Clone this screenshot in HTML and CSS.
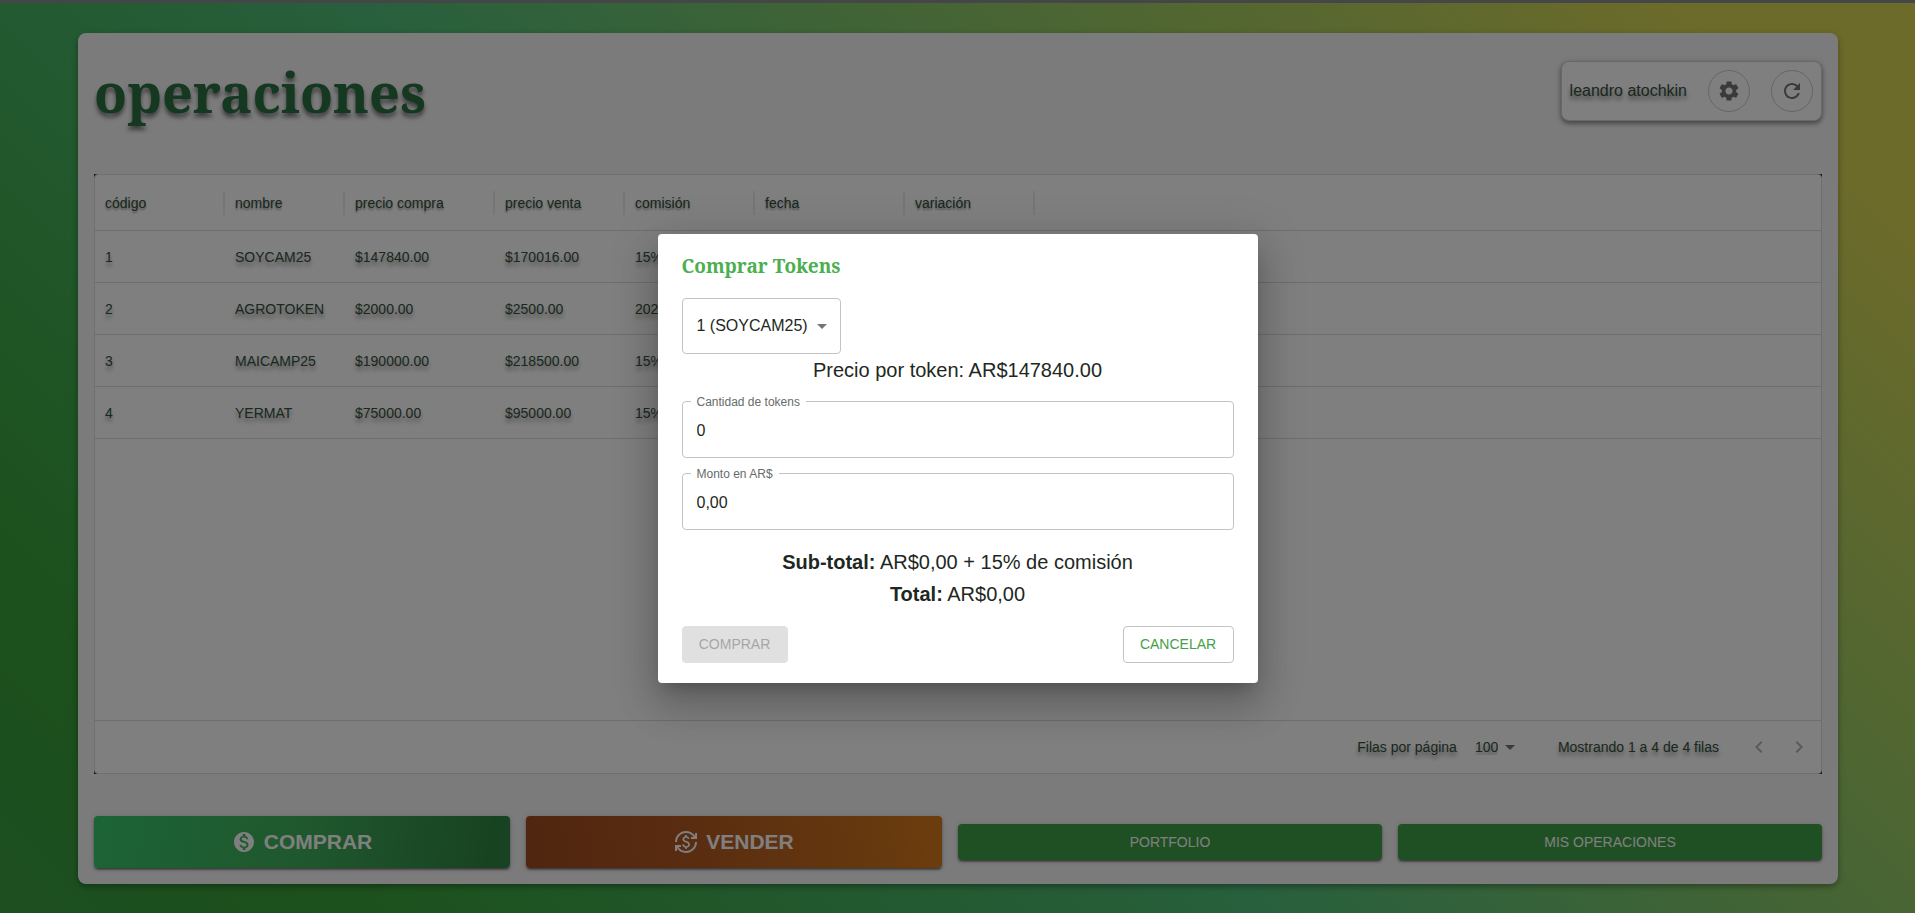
FILE: index.html
```html
<!DOCTYPE html>
<html lang="es">
<head>
<meta charset="utf-8">
<title>operaciones</title>
<link rel="stylesheet" href="styles.css">
</head>
<body>
<div class="topline"></div>
<div class="stage">
  <main class="card">
    <header class="head">
      <h1 class="title">operaciones</h1>
      <div class="user">
        <span class="user-name">leandro atochkin</span>
        <button class="round" type="button" aria-label="Configuración">
          <svg class="icon" viewBox="0 0 24 24"><path d="M19.14 12.94c.04-.3.06-.61.06-.94 0-.32-.02-.64-.07-.94l2.03-1.58c.18-.14.23-.41.12-.61l-1.92-3.32c-.12-.22-.37-.29-.59-.22l-2.39.96c-.5-.38-1.03-.7-1.62-.94l-.36-2.54c-.04-.24-.24-.41-.48-.41h-3.84c-.24 0-.43.17-.47.41l-.36 2.54c-.59.24-1.13.57-1.62.94l-2.39-.96c-.22-.08-.47 0-.59.22L2.74 8.87c-.12.21-.08.47.12.61l2.03 1.58c-.05.3-.09.63-.09.94s.02.64.07.94l-2.03 1.58c-.18.14-.23.41-.12.61l1.92 3.32c.12.22.37.29.59.22l2.39-.96c.5.38 1.03.7 1.62.94l.36 2.54c.05.24.24.41.48.41h3.84c.24 0 .44-.17.47-.41l.36-2.54c.59-.24 1.13-.56 1.62-.94l2.39.96c.22.08.47 0 .59-.22l1.92-3.32c.12-.22.07-.47-.12-.61l-2.01-1.58zM12 15.6c-1.98 0-3.6-1.62-3.6-3.6s1.62-3.6 3.6-3.6 3.6 1.62 3.6 3.6-1.62 3.6-3.6 3.6z"/></svg>
        </button>
        <button class="round" type="button" aria-label="Actualizar">
          <svg class="icon" viewBox="0 0 24 24"><path d="M17.65 6.35C16.2 4.9 14.21 4 12 4c-4.42 0-7.99 3.58-7.99 8s3.57 8 7.99 8c3.73 0 6.84-2.55 7.73-6h-2.08c-.82 2.33-3.04 4-5.65 4-3.31 0-6-2.69-6-6s2.69-6 6-6c1.66 0 3.14.69 4.22 1.78L13 11h7V4l-2.35 2.35z"/></svg>
        </button>
      </div>
    </header>

    <div class="grid-wrap">
      <section class="grid">
        <table class="table">
          <colgroup>
            <col class="c130"><col class="c120"><col class="c150"><col class="c130"><col class="c130"><col class="c150"><col class="c130"><col>
          </colgroup>
          <thead>
            <tr>
              <th><span>código</span></th><th><span>nombre</span></th><th><span>precio compra</span></th><th><span>precio venta</span></th><th><span>comisión</span></th><th><span>fecha</span></th><th><span>variación</span></th><td></td>
            </tr>
          </thead>
          <tbody>
            <tr><td>1</td><td>SOYCAM25</td><td>$147840.00</td><td>$170016.00</td><td>15%</td><td></td><td></td><td></td></tr>
            <tr><td>2</td><td>AGROTOKEN</td><td>$2000.00</td><td>$2500.00</td><td>2025</td><td></td><td></td><td></td></tr>
            <tr><td>3</td><td>MAICAMP25</td><td>$190000.00</td><td>$218500.00</td><td>15%</td><td></td><td></td><td></td></tr>
            <tr><td>4</td><td>YERMAT</td><td>$75000.00</td><td>$95000.00</td><td>15%</td><td></td><td></td><td></td></tr>
          </tbody>
        </table>
        <footer class="pager">
          <label for="rows">Filas por página</label>
          <span class="pick pick-small">
            <select id="rows"><option>100</option></select>
            <svg class="icon arrow" viewBox="0 0 24 24"><path d="M7 10l5 5 5-5z"/></svg>
          </span>
          <span class="range">Mostrando 1 a 4 de 4 filas</span>
          <button class="step" type="button" disabled aria-label="Anterior"><svg class="icon" viewBox="0 0 24 24"><path d="M15.41 7.41L14 6l-6 6 6 6 1.41-1.41L10.83 12z"/></svg></button>
          <button class="step" type="button" disabled aria-label="Siguiente"><svg class="icon" viewBox="0 0 24 24"><path d="M8.59 16.59L13.17 12 8.59 7.41 10 6l6 6-6 6z"/></svg></button>
        </footer>
      </section>
    </div>

    <nav class="actions">
      <button class="btn big buy" type="button">
        <svg class="icon" viewBox="0 0 24 24"><path d="M12 2C6.48 2 2 6.48 2 12s4.48 10 10 10 10-4.48 10-10S17.52 2 12 2zm1.41 16.09V20h-2.67v-1.93c-1.71-.36-3.16-1.46-3.27-3.4h1.96c.1 1.05.82 1.87 2.65 1.87 1.96 0 2.4-.98 2.4-1.59 0-.83-.44-1.61-2.67-2.14-2.48-.6-4.18-1.62-4.18-3.67 0-1.72 1.39-2.84 3.11-3.21V4h2.67v1.95c1.86.45 2.79 1.86 2.85 3.39H14.3c-.05-1.11-.64-1.87-2.22-1.87-1.5 0-2.4.68-2.4 1.64 0 .84.65 1.39 2.67 1.91s4.18 1.39 4.18 3.91c-.01 1.83-1.38 2.83-3.12 3.16z"/></svg>
        COMPRAR
      </button>
      <button class="btn big sell" type="button">
        <svg class="icon" viewBox="0 0 24 24"><path d="M12.89 11.1c-1.78-.59-2.64-.96-2.64-1.9 0-1.02 1.11-1.39 1.81-1.39 1.31 0 1.79.99 1.9 1.34l1.58-.67c-.15-.44-.82-1.91-2.66-2.23V5h-1.75v1.26c-2.6.56-2.62 2.85-2.62 2.96 0 2.27 2.25 2.91 3.35 3.31 1.58.56 2.28 1.07 2.28 2.03 0 1.13-1.05 1.61-1.98 1.61-1.82 0-2.34-1.87-2.4-2.09l-1.66.67c.63 2.19 2.28 2.78 3.02 2.96V19h1.75v-1.24c.52-.09 3.02-.59 3.02-3.22.01-1.39-.6-2.61-3-3.44zM3 21H1v-6h6v2H4.52c1.61 2.41 4.36 4 7.48 4 4.97 0 9-4.03 9-9h2c0 6.08-4.92 11-11 11-3.72 0-7.01-1.85-9-4.67V21zM1 12C1 5.92 5.92 1 12 1c3.72 0 7.01 1.85 9 4.67V3h2v6h-6V7h2.48C17.87 4.59 15.12 3 12 3c-4.97 0-9 4.03-9 9H1z"/></svg>
        VENDER
      </button>
      <button class="btn" type="button">PORTFOLIO</button>
      <button class="btn" type="button">MIS OPERACIONES</button>
    </nav>
  </main>

  <div class="backdrop">
    <form class="dialog" role="dialog" aria-labelledby="dialog-title">
      <h2 class="dialog-title" id="dialog-title">Comprar Tokens</h2>
      <span class="pick pick-box">
        <select aria-label="Token"><option>1 (SOYCAM25)</option></select>
        <svg class="icon arrow" viewBox="0 0 24 24"><path d="M7 10l5 5 5-5z"/></svg>
      </span>
      <p class="line">Precio por token: AR$147840.00</p>
      <div class="fields">
        <fieldset class="field">
          <legend><label for="qty">Cantidad de tokens</label></legend>
          <input id="qty" type="text" value="0">
        </fieldset>
        <fieldset class="field">
          <legend><label for="amount">Monto en AR$</label></legend>
          <input id="amount" type="text" value="0,00">
        </fieldset>
      </div>
      <p class="line"><strong>Sub-total:</strong> AR$0,00 + 15% de comisión</p>
      <p class="line"><strong>Total:</strong> AR$0,00</p>
      <div class="dialog-actions">
        <button class="dbtn solid" type="button" disabled>COMPRAR</button>
        <button class="dbtn outline" type="button">CANCELAR</button>
      </div>
    </form>
  </div>
</div>
</body>
</html>
```
FILE: styles.css
```css
* { box-sizing: border-box; }

body {
  margin: 0;
  min-height: 100vh;
  display: flex;
  flex-direction: column;
  font-family: "Liberation Sans", Arial, sans-serif;
  font-size: 14px;
  color: #34503c;
}

button, input, select { font: inherit; color: inherit; }

.icon { width: 24px; height: 24px; fill: currentColor; display: block; flex: none; }

.topline { height: 3px; background: #444647; }

.stage {
  position: relative;
  flex: 1;
  display: flex;
  padding: 30px 77px 29px 78px;
  background: linear-gradient(45deg, #3a9e42 0%, #38a038 12%, #50c07a 45%, #dad654 92%);
}

.card {
  flex: 1;
  display: flex;
  flex-direction: column;
  padding: 28px 16px 16px;
  border-radius: 8px;
  background: #f6f6f6;
  box-shadow: 0 3px 5px rgba(0, 0, 0, .2), 0 2px 8px rgba(0, 0, 0, .15);
}

.head {
  display: flex;
  justify-content: space-between;
  align-items: flex-start;
  margin-bottom: 51px;
}

.title {
  margin: 0;
  font-family: "Droid Serif", "Noto Serif", "Liberation Serif", serif;
  font-size: 54px;
  line-height: 62px;
  font-weight: 700;
  color: #2a7040;
  text-shadow: 0 4px 4px rgba(0, 0, 0, .5);
}

.user {
  display: flex;
  align-items: center;
  gap: 21px;
  padding: 8px;
  border: 1px solid #d0d0d0;
  border-radius: 8px;
  background: #fff;
  box-shadow: 0 3px 4px rgba(0, 0, 0, .3), 0 1px 6px rgba(0, 0, 0, .2);
}

.user-name { font-size: 16px; text-shadow: 0 4px 4px rgba(0, 0, 0, .5); }

.round {
  display: grid;
  place-items: center;
  width: 42px;
  height: 42px;
  padding: 0;
  border: 1px solid #ccc;
  border-radius: 50%;
  background: none;
  color: #707674;
}

.grid-wrap { flex: 1; display: flex; background: #223c30; margin-bottom: 42px; }

.grid {
  flex: 1;
  display: flex;
  flex-direction: column;
  border: 1px solid #dedede;
  border-radius: 4px;
  background: #fff;
  text-shadow: 0 4px 4px rgba(0, 0, 0, .4);
}

.table { width: 100%; table-layout: fixed; border-collapse: separate; border-spacing: 0; }
.c120 { width: 120px; }
.c130 { width: 130px; }
.c150 { width: 150px; }
.table th, .table td {
  padding: 0 10px;
  height: 52px;
  border-bottom: 1px solid #dcdcdc;
  text-align: left;
  font-weight: 400;
  white-space: nowrap;
}
.table th {
  height: 56px;
  padding-right: 0;
  text-shadow: 0 2px 2px rgba(0, 0, 0, .4);
}
.table th span {
  display: block;
  line-height: 24px;
  border-right: 2px solid #ececec;
}

.pager {
  margin-top: auto;
  height: 53px;
  padding-right: 2px;
  border-top: 1px solid #dcdcdc;
  display: flex;
  align-items: center;
  justify-content: flex-end;
}

.pick { position: relative; display: flex; align-items: center; }
.pick select { appearance: none; border: 0; background: none; outline: 0; text-shadow: inherit; }
.pick .arrow { position: absolute; right: 0; pointer-events: none; color: #757575; }
.pick-small { margin: 0 36px 0 18px; }
.pick-small select { padding: 0 24px 0 0; width: 47px; }
.range { margin-right: 20px; }

.step {
  display: grid;
  place-items: center;
  width: 40px;
  height: 40px;
  padding: 0;
  border: 0;
  background: none;
  color: #b4b4b4;
}

.actions {
  display: grid;
  grid-template-columns: 416fr 416fr 424fr 424fr;
  gap: 16px;
  align-items: center;
}

.btn {
  display: flex;
  align-items: center;
  justify-content: center;
  gap: 8px;
  height: 36px;
  padding: 0 16px;
  border: 0;
  border-radius: 4px;
  background: #3ea046;
  color: #fff;
  box-shadow: 0 3px 1px -2px rgba(0, 0, 0, .2), 0 2px 2px rgba(0, 0, 0, .3), 0 1px 5px rgba(0, 0, 0, .2);
}
.big { height: 52px; font-size: 21px; font-weight: 700; }
.buy { background: linear-gradient(100deg, #38c86c 0%, #40b05a 50%, #308644 95%); }
.sell { background: linear-gradient(80deg, #a04c20 0%, #b45a22 40%, #d4781c 95%); }

.backdrop {
  position: absolute;
  inset: 0;
  display: flex;
  align-items: center;
  justify-content: center;
  background: rgba(0, 0, 0, .5);
}

.dialog {
  width: 600px;
  padding: 16px 24px 20px;
  border-radius: 4px;
  background: #fff;
  color: #1e2822;
  box-shadow: 0 11px 15px -7px rgba(0, 0, 0, .2), 0 24px 38px 3px rgba(0, 0, 0, .14), 0 9px 46px 8px rgba(0, 0, 0, .12);
}

.dialog-title {
  margin: 0 0 16px;
  font-family: "Droid Serif", "Noto Serif", "Liberation Serif", serif;
  font-size: 19px;
  line-height: 32px;
  color: #4caf50;
}

.pick-box { width: 159px; height: 56px; border: 1px solid #c0c4c2; border-radius: 4px; }
.pick-box select { width: 100%; height: 100%; padding: 0 32px 0 14px; font-size: 16px; }
.pick-box .arrow { right: 6px; }

.line { margin: 0; font-size: 20px; line-height: 32px; text-align: center; }

.fields { display: grid; gap: 10px; padding: 10px 0 16px; }
.field {
  min-width: 0;
  margin: 0;
  padding: 0 8px;
  height: 62px;
  border: 1px solid #c0c4c2;
  border-radius: 4px;
}
.field legend { padding: 0 6px; font-size: 12px; line-height: 12px; color: #666c69; }
.field input {
  display: block;
  width: 100%;
  height: 46px;
  padding: 0 6px;
  border: 0;
  outline: 0;
  background: none;
  font-size: 16px;
}

.dialog-actions { display: flex; justify-content: space-between; margin-top: 16px; }
.dbtn { height: 37px; padding: 0 16px; border-radius: 4px; border: 1px solid #c0c4c2; background: none; }
.solid { width: 106px; border-color: #e0e0e0; background: #e0e0e0; color: #a6a6a6; }
.outline { width: 111px; color: #43a047; }
```
